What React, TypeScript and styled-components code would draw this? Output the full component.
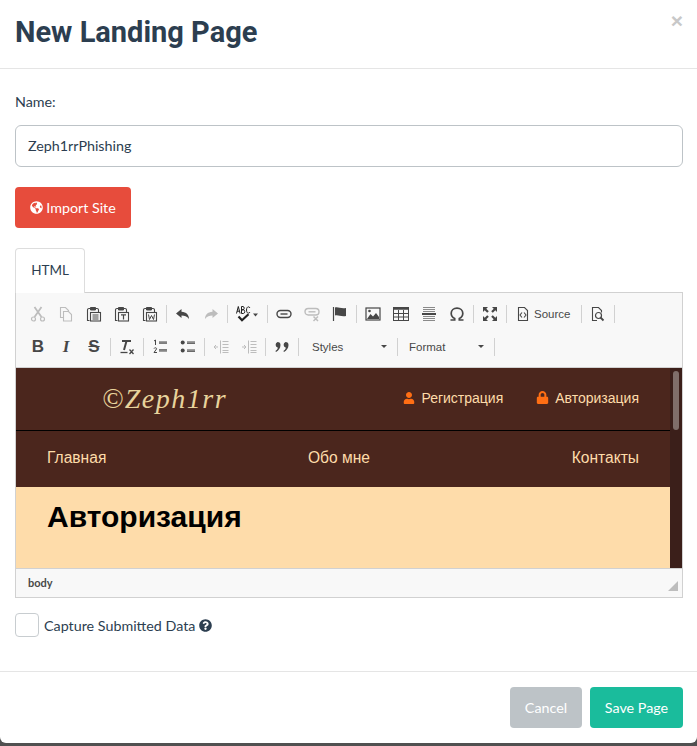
import React from 'react';
import styled, { createGlobalStyle } from 'styled-components';
import { FaGlobeAmericas, FaLock, FaQuestionCircle, FaUser } from 'react-icons/fa';

const GlobalStyle = createGlobalStyle`
	html, body {
		margin: 0;
		padding: 0;
		background: #505050;
	}
	* {
		box-sizing: border-box;
	}
`;

const BODY_FONT = `"Lato", "Noto Sans", sans-serif`;
const ARIAL = `"Liberation Sans", Arial, sans-serif`;

type IconProps = { off?: boolean };

const Ico: React.FC<React.PropsWithChildren<IconProps>> = ({ off, children }) => (
	<svg width="16" height="16" viewBox="0 0 16 16" fill="none" stroke={off ? '#bdbdbd' : '#474747'} color={off ? '#bdbdbd' : '#474747'}>
		{children}
	</svg>
);

const Clip = () => (
	<>
		<path d="M3.500 14.500H1.500V4A1.500 1.500 0 0 1 3 2.500h1.500M9.500 2.500H11A1.500 1.500 0 0 1 12.500 4v2" strokeWidth="1.100" />
		<path d="M4.500 1.500h5v2.500h-5z" fill="currentColor" strokeWidth="1" />
	</>
);

const icons: Record<string, (off?: boolean) => React.ReactNode> = {
	cut: (off) => (
		<Ico off={off}>
			<path d="M4.500 1l7 10M11.500 1l-7 10" strokeWidth="1.800" />
			<circle cx="3.500" cy="13" r="2" strokeWidth="1.200" />
			<circle cx="12.500" cy="13" r="2" strokeWidth="1.200" />
		</Ico>
	),
	copy: (off) => (
		<Ico off={off}>
			<path d="M5.500 11.500h-3v-10h5l3 3v1" strokeWidth="1.100" />
			<path d="M5.500 5.500h5l3 3v6.500h-8z" strokeWidth="1.100" />
		</Ico>
	),
	paste: () => (
		<Ico>
			<Clip />
			<rect x="4.500" y="6.500" width="10" height="8.500" strokeWidth="1.100" />
			<path d="M6.500 9h6M6.500 11h6M6.500 13h6" strokeWidth="1" />
		</Ico>
	),
	pasteText: () => (
		<Ico>
			<Clip />
			<rect x="4.500" y="6.500" width="10" height="8.500" strokeWidth="1.100" />
			<path d="M7 8.800h5M9.500 8.800v4.700" strokeWidth="1.200" />
		</Ico>
	),
	pasteWord: () => (
		<Ico>
			<Clip />
			<rect x="4.500" y="6.500" width="10" height="8.500" strokeWidth="1.100" />
			<path d="M6.500 8.500l1 5 2-4 2 4 1-5" strokeWidth="1" />
		</Ico>
	),
	undo: () => (
		<Ico>
			<path d="M6.500 3L1 7.500l5.500 4.500V9.500c3 0 5.500.5 7.500 3.500 0-4-2.500-7-7.500-7.200z" fill="currentColor" stroke="none" />
		</Ico>
	),
	redo: (off) => (
		<Ico off={off}>
			<path d="M9.500 3L15 7.500 9.500 12V9.500c-3 0-5.500.5-7.500 3.500 0-4 2.500-7 7.500-7.200z" fill="currentColor" stroke="none" />
		</Ico>
	),
	spell: () => (
		<svg width="23" height="16" viewBox="0 0 23 16" fill="none" stroke="#222">
			<path d="M0.500 7.500l1.800-7 1.800 7M1 5.200h2.600" strokeWidth="1" />
			<path d="M5.500 0.500v7h1.800c2 0 2-3.700 0-3.700H5.500M5.500 3.800h1.500c1.600 0 1.600-3.300 0-3.300H5.500" strokeWidth="1" />
			<path d="M14 2C13 0 10.500 0.500 10.500 4S13 8 14 6" strokeWidth="1" />
			<path d="M2.500 10.500l3.500 3.700 6.500-6" strokeWidth="2.200" />
			<path d="M17 7.500h5l-2.500 3z" fill="#474747" stroke="none" />
		</svg>
	),
	link: () => (
		<Ico>
			<rect x="1" y="4.500" width="14" height="7" rx="3.500" strokeWidth="1.400" />
			<path d="M4.500 8h7" strokeWidth="1.400" />
		</Ico>
	),
	unlink: (off) => (
		<Ico off={off}>
			<rect x="1" y="2.500" width="14" height="6.500" rx="3.200" strokeWidth="1.400" />
			<path d="M4.500 5.800h7" strokeWidth="1.400" />
			<path d="M9.500 10.500l4.500 4.500M14 10.500L9.500 15" strokeWidth="1.500" />
		</Ico>
	),
	flag: () => (
		<Ico>
			<path d="M1.500 1v14" strokeWidth="1.200" />
			<path d="M3 1.500c3-1 6 1.500 11 .5v8c-5 1-8-1.500-11-.5z" fill="currentColor" stroke="none" />
		</Ico>
	),
	image: () => (
		<Ico>
			<rect x="1" y="2" width="14" height="12" strokeWidth="1.200" />
			<path d="M2 13l3.500-5 2.500 2.500 3-3.500 3 4v2z" fill="currentColor" stroke="none" />
			<circle cx="4.500" cy="5" r="1.300" fill="currentColor" stroke="none" />
		</Ico>
	),
	table: () => (
		<Ico>
			<rect x="0.500" y="1.500" width="15" height="13" strokeWidth="1" />
			<path d="M0.500 2.500h15" strokeWidth="2.500" />
			<path d="M0.500 7.500h15M0.500 11h15M5.500 4v10M10.500 4v10" strokeWidth="1" />
		</Ico>
	),
	hr: () => (
		<Ico>
			<path d="M2 1.500h12M2 3.500h12M2 5.500h12M2 10.500h12M2 12.500h12M2 14.500h12" stroke="#8a8a8a" strokeWidth="1" />
			<path d="M1 8h14" strokeWidth="2" />
		</Ico>
	),
	omega: () => (
		<Ico>
			<path d="M1.500 14h4.200v-1.500C3.500 11.500 2.200 9.500 2.200 7.300 2.200 4.200 4.700 2.200 8 2.200s5.800 2 5.800 5.100c0 2.200-1.300 4.200-3.500 5.200V14h4.200" strokeWidth="1.700" />
		</Ico>
	),
	maximize: () => (
		<Ico>
			<path d="M1 1h5L4.300 2.700 6.800 5.200 5.200 6.800 2.700 4.300 1 6zM15 1v5l-1.700-1.700-2.500 2.500-1.600-1.600 2.500-2.500L10 1zM1 15v-5l1.700 1.700 2.500-2.500 1.600 1.600-2.500 2.500L6 15zM15 15h-5l1.700-1.700-2.500-2.500 1.600-1.600 2.500 2.500L15 10z" fill="currentColor" stroke="none" />
		</Ico>
	),
	source: () => (
		<Ico>
			<path d="M3.500 1.500h6l3 3v10h-9z" strokeWidth="1.100" />
			<path d="M7 6.500L5 9l2 2.500M9 6.500l2 2.500-2 2.500" strokeWidth="1.100" />
		</Ico>
	),
	preview: () => (
		<Ico>
			<path d="M7 14.500H2.500v-13h6l3 3v2" strokeWidth="1.100" />
			<circle cx="8.500" cy="9.500" r="3" strokeWidth="1.200" />
			<path d="M10.500 11.500l3 3" strokeWidth="1.800" />
		</Ico>
	),
	strike: () => <StrikeGlyph>S</StrikeGlyph>,
	removeFormat: () => (
		<Ico>
			<path d="M3 2h9M7.500 2L5 11" strokeWidth="2" />
			<path d="M1.500 13.500h7" strokeWidth="1.300" />
			<path d="M10.500 10.500l4 4.500M14.500 10.500l-4 4.500" strokeWidth="1.300" />
		</Ico>
	),
	ol: () => (
		<Ico>
			<path d="M7 3h8M7 4.200h8M7 10.800h8M7 12h8" strokeWidth="1" />
			<path d="M2 2l1.500-1v5M2 9.500c.5-1 3-1 2.500.5L2 13.500h3" strokeWidth="1" />
		</Ico>
	),
	ul: () => (
		<Ico>
			<circle cx="2.700" cy="3.500" r="2" fill="currentColor" stroke="none" />
			<circle cx="2.700" cy="11.500" r="2" fill="currentColor" stroke="none" />
			<path d="M7 3h8M7 4.300h8M7 11h8M7 12.300h8" strokeWidth="1" />
		</Ico>
	),
	outdent: (off) => (
		<Ico off={off}>
			<path d="M7.500 1.500v13" strokeWidth="1" />
			<path d="M9.500 2.500h6M9.500 5.500h6M9.500 8.500h6M9.500 11.500h6M9.500 13.500h6" strokeWidth="1" />
			<path d="M5 8H1M3 6L1 8l2 2" strokeWidth="1" />
		</Ico>
	),
	indent: (off) => (
		<Ico off={off}>
			<path d="M7.500 1.500v13" strokeWidth="1" />
			<path d="M9.500 2.500h6M9.500 5.500h6M9.500 8.500h6M9.500 11.500h6M9.500 13.500h6" strokeWidth="1" />
			<path d="M1 8h4M3 6l2 2-2 2" strokeWidth="1" />
		</Ico>
	),
	quote: () => (
		<Ico>
			<path d="M3.500 3a3 3 0 0 1 3 3c0 3-1.800 5.500-4.500 7l-.6-.9C2.800 11 3.700 9.800 3.900 8.700A3 3 0 0 1 3.500 3zM11.500 3a3 3 0 0 1 3 3c0 3-1.800 5.500-4.500 7l-.6-.9c1.400-1.100 2.300-2.300 2.500-3.400A3 3 0 0 1 11.500 3z" fill="currentColor" stroke="none" />
		</Ico>
	),
};

type Item =
	| { icon: string; off?: boolean; wide?: number; label?: string }
	| { combo: string; width: number; inset: number }
	| 'sep';

const ROW_ONE: Item[] = [
	{ icon: 'cut', off: true },
	{ icon: 'copy', off: true },
	{ icon: 'paste' },
	{ icon: 'pasteText' },
	{ icon: 'pasteWord' },
	'sep',
	{ icon: 'undo' },
	{ icon: 'redo', off: true },
	'sep',
	{ icon: 'spell', wide: 35 },
	'sep',
	{ icon: 'link' },
	{ icon: 'unlink', off: true },
	{ icon: 'flag' },
	'sep',
	{ icon: 'image' },
	{ icon: 'table' },
	{ icon: 'hr' },
	{ icon: 'omega' },
	'sep',
	{ icon: 'maximize' },
	'sep',
	{ icon: 'source', wide: 70, label: 'Source' },
	'sep',
	{ icon: 'preview' },
	'sep',
];

const ROW_TWO: Item[] = [
	{ icon: 'bold' },
	{ icon: 'italic' },
	{ icon: 'strike' },
	'sep',
	{ icon: 'removeFormat' },
	'sep',
	{ icon: 'ol' },
	{ icon: 'ul' },
	'sep',
	{ icon: 'outdent', off: true },
	{ icon: 'indent', off: true },
	'sep',
	{ icon: 'quote' },
	'sep',
	{ combo: 'Styles', width: 94, inset: 11 },
	'sep',
	{ combo: 'Format', width: 92, inset: 9 },
	'sep',
];

const renderItem = (item: Item, i: number) => {
	if (item === 'sep') return <ToolSeparator key={i} />;
	if ('combo' in item) {
		return (
			<ComboBox key={i} $width={item.width} $inset={item.inset}>
				{item.combo}
				<ComboArrow />
			</ComboBox>
		);
	}
	if (item.icon === 'bold') return <ToolButton key={i}><BoldGlyph>B</BoldGlyph></ToolButton>;
	if (item.icon === 'italic') return <ToolButton key={i}><ItalicGlyph>I</ItalicGlyph></ToolButton>;
	return (
		<ToolButton key={i} $width={item.wide}>
			{icons[item.icon](item.off)}
			{item.label && <ToolLabel>{item.label}</ToolLabel>}
		</ToolButton>
	);
};

const App: React.FC = (): JSX.Element => {
	return (
		<>
			<GlobalStyle />
			<Modal>
				<ModalHeader>
					<ModalTitle>New Landing Page</ModalTitle>
					<CloseMark>×</CloseMark>
				</ModalHeader>
				<ModalBody>
					<FieldLabel>Name:</FieldLabel>
					<NameInput defaultValue="Zeph1rrPhishing" />
					<ImportButton>
						<FaGlobeAmericas size={13} />
						Import Site
					</ImportButton>
					<TabBar>
						<Tab>HTML</Tab>
					</TabBar>
					<Editor>
						<Toolbar>
							<ToolRow>{ROW_ONE.map(renderItem)}</ToolRow>
							<ToolRow>{ROW_TWO.map(renderItem)}</ToolRow>
						</Toolbar>
						<EditorFrame>
							<PreviewPage>
								<SiteTop>
									<SiteLogo>©Zeph1rr</SiteLogo>
									<SiteAuth>
										<AuthLink><FaUser size={12} />Регистрация</AuthLink>
										<AuthLink><FaLock size={13} />Авторизация</AuthLink>
									</SiteAuth>
								</SiteTop>
								<SiteNav>
									<span>Главная</span>
									<span>Обо мне</span>
									<span>Контакты</span>
								</SiteNav>
								<SiteContent>
									<SiteHeading>Авторизация</SiteHeading>
								</SiteContent>
							</PreviewPage>
							<FrameScrollbar>
								<FrameThumb />
							</FrameScrollbar>
						</EditorFrame>
						<EditorFooter>
							<PathLabel>body</PathLabel>
							<ResizeGrip width="10" height="10" viewBox="0 0 10 10">
								<path d="M10 0v10H0z" fill="#bdbdbd" />
							</ResizeGrip>
						</EditorFooter>
					</Editor>
					<CaptureRow>
						<CheckBox />
						<CaptureLabel>Capture Submitted Data</CaptureLabel>
						<FaQuestionCircle size={13} color="#2c3e50" />
					</CaptureRow>
				</ModalBody>
				<ModalFooter>
					<CancelButton>Cancel</CancelButton>
					<SaveButton>Save Page</SaveButton>
				</ModalFooter>
			</Modal>
		</>
	);
};

const Modal = styled.div`
	width: 697px;
	height: 743px;
	background: #ffffff;
	border-radius: 0 0 6px 6px;
	display: flex;
	flex-direction: column;
	font-family: ${BODY_FONT};
	color: #2c3e50;
	overflow: hidden;
`;

const ModalHeader = styled.div`
	height: 69px;
	flex: none;
	border-bottom: 1px solid #e5e5e5;
	padding: 0 15px;
	display: flex;
	justify-content: space-between;
	align-items: flex-start;
`;

const ModalTitle = styled.h4`
	margin: 14px 0 0;
	font-family: Roboto, sans-serif;
	font-size: 29px;
	font-weight: 700;
	line-height: 36px;
	color: #2c3e50;
`;

const CloseMark = styled.span`
	margin-top: 10px;
	margin-right: -1px;
	font-family: ${ARIAL};
	font-size: 21px;
	font-weight: 700;
	line-height: 21px;
	color: #c8c8c8;
`;

const ModalBody = styled.div`
	flex: 1;
	padding: 22px 14px 0 15px;
	display: flex;
	flex-direction: column;
	align-items: flex-start;
`;

const FieldLabel = styled.label`
	font-size: 14.300px;
	line-height: 22px;
	height: 22px;
	margin-bottom: 12px;
`;

const NameInput = styled.input`
	width: 668px;
	height: 42px;
	border: 1.5px solid #bdc3c7;
	border-radius: 6px;
	padding: 0 12px 2px;
	font-family: ${BODY_FONT};
	font-size: 14.300px;
	color: #2c3e50;
	outline: none;
`;

const FilledButton = styled.button`
	border: 0;
	border-radius: 4px;
	height: 41px;
	padding: 0 0 1px;
	color: #ffffff;
	font-family: ${BODY_FONT};
	font-size: 14.300px;
	display: inline-flex;
	align-items: center;
	justify-content: center;
`;

const ImportButton = styled(FilledButton)`
	margin-top: 20px;
	width: 116px;
	gap: 3px;
	background: #e74c3c;
`;

const TabBar = styled.div`
	margin-top: 20px;
	display: flex;
	height: 44px;
`;

const Tab = styled.div`
	width: 70px;
	height: 45px;
	padding-bottom: 2px;
	border: 1px solid #dddddd;
	border-bottom: 0;
	border-radius: 4px 4px 0 0;
	background: #ffffff;
	position: relative;
	z-index: 1;
	display: flex;
	align-items: center;
	justify-content: center;
	font-size: 13.500px;
	color: #2c3e50;
`;

const Editor = styled.div`
	width: 668px;
	height: 306px;
	border: 1px solid #d1d1d1;
	display: flex;
	flex-direction: column;
`;

const Toolbar = styled.div`
	height: 75px;
	flex: none;
	background: #f8f8f8;
	border-bottom: 1px solid #d1d1d1;
	padding: 4px 0 0 8px;
`;

const ToolRow = styled.div`
	display: flex;
	align-items: center;
	height: 33px;
`;

const ToolButton = styled.span<{ $width?: number }>`
	width: ${(p) => p.$width ?? 28}px;
	height: 26px;
	flex: none;
	display: flex;
	align-items: center;
	padding-left: 6px;
	color: #474747;
`;

const ToolLabel = styled.span`
	margin-left: 3px;
	font-family: ${ARIAL};
	font-size: 11.500px;
	color: #484848;
`;

const BoldGlyph = styled.span`
	width: 16px;
	text-align: center;
	font-family: ${ARIAL};
	font-size: 17px;
	font-weight: 700;
	line-height: 16px;
`;

const ItalicGlyph = styled(BoldGlyph)`
	font-family: "Liberation Serif", serif;
	font-style: italic;
`;

const StrikeGlyph = styled(BoldGlyph)`
	text-decoration: line-through;
`;

const ToolSeparator = styled.span`
	width: 1px;
	height: 18px;
	flex: none;
	margin: 0 2px;
	background: #d1d1d1;
`;

const ComboBox = styled.span<{ $width: number; $inset: number }>`
	width: ${(p) => p.$width}px;
	flex: none;
	display: flex;
	align-items: center;
	justify-content: space-between;
	padding: 0 8px 0 ${(p) => p.$inset}px;
	font-family: ${ARIAL};
	font-size: 11.500px;
	color: #484848;
`;

const ComboArrow = styled.i`
	width: 0;
	height: 0;
	border-left: 3px solid transparent;
	border-right: 3px solid transparent;
	border-top: 3px solid #474747;
`;

const EditorFrame = styled.div`
	height: 200px;
	flex: none;
	display: flex;
	overflow: hidden;
`;

const PreviewPage = styled.div`
	flex: 1;
	font-family: ${ARIAL};
	color: #fedcaa;
	display: flex;
	flex-direction: column;
`;

const SiteTop = styled.div`
	height: 63px;
	flex: none;
	background: #4b261d;
	border-bottom: 1px solid #000000;
	padding: 0 31px 1px 86px;
	display: flex;
	align-items: center;
	justify-content: space-between;
`;

const SiteLogo = styled.div`
	font-family: "Liberation Serif", serif;
	font-style: italic;
	font-size: 28px;
	letter-spacing: 1.500px;
	color: #e8d39c;
`;

const SiteAuth = styled.div`
	display: flex;
	gap: 33px;
	padding-bottom: 2px;
`;

const AuthLink = styled.span`
	display: flex;
	align-items: center;
	gap: 6px;
	font-size: 14px;

	svg {
		color: #ff6e14;
	}
`;

const SiteNav = styled.div`
	height: 56px;
	flex: none;
	background: #4b261d;
	padding: 0 31px 2px;
	display: flex;
	align-items: center;
	justify-content: space-between;
	font-size: 15.600px;
`;

const SiteContent = styled.div`
	flex: 1;
	background: #fedcaa;
	padding: 12px 31px;
`;

const SiteHeading = styled.h1`
	margin: 0;
	font-size: 30px;
	line-height: 36px;
	font-weight: 700;
	color: #000000;
`;

const FrameScrollbar = styled.div`
	width: 12px;
	flex: none;
	background: #3b1f1a;
	padding: 3px;
`;

const FrameThumb = styled.div`
	height: 59px;
	border-radius: 3px;
	background: #7f6e6a;
`;

const EditorFooter = styled.div`
	flex: 1;
	background: #f8f8f8;
	border-top: 1px solid #d1d1d1;
	padding: 0 4px 2px 12px;
	display: flex;
	align-items: center;
	justify-content: space-between;
`;

const PathLabel = styled.span`
	font-family: ${BODY_FONT};
	font-size: 11px;
	font-weight: 700;
	color: #484848;
`;

const ResizeGrip = styled.svg`
	align-self: flex-end;
	margin-bottom: 4px;
`;

const CaptureRow = styled.div`
	margin-top: 15px;
	display: flex;
	align-items: center;
	gap: 4px;
`;

const CheckBox = styled.span`
	width: 24px;
	height: 24px;
	margin-right: 1px;
	border: 1px solid #c8cdd0;
	border-radius: 4px;
`;

const CaptureLabel = styled.span`
	font-size: 14.300px;
`;

const ModalFooter = styled.div`
	height: 72px;
	flex: none;
	border-top: 1px solid #e5e5e5;
	padding: 15px 14px 0 0;
	display: flex;
	justify-content: flex-end;
	gap: 8px;
`;

const CancelButton = styled(FilledButton)`
	width: 72px;
	background: #bdc3c7;
`;

const SaveButton = styled(FilledButton)`
	width: 93px;
	background: #1abc9c;
`;

export default App;
